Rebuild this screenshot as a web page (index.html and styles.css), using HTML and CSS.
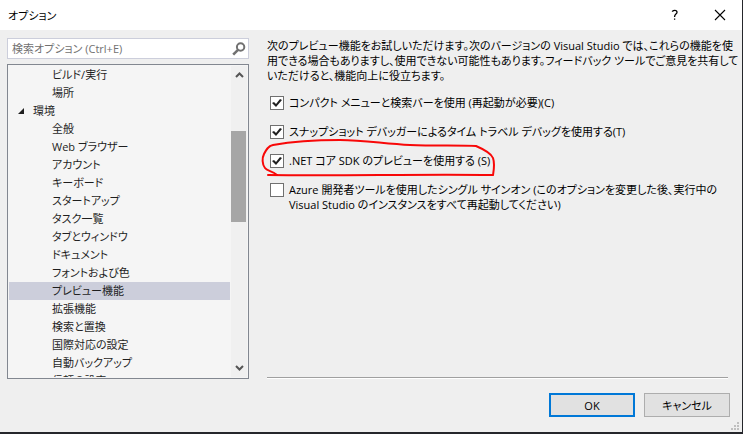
FILE: index.html
```html
<!DOCTYPE html>
<html lang="ja">
<head>
  <meta charset="UTF-8">
  <meta name="viewport" content="width=device-width, initial-scale=1.0">
  <title>オプション</title>
  <link rel="stylesheet" href="styles.css">
</head>
<body>
  <div class="dialog">
    <header class="titlebar">
      <h1>オプション</h1>
      <button class="title-btn" aria-label="ヘルプ">
        <svg width="8" height="12" viewBox="0 0 8 12"><path d="M1.5 2.8V2.2C2.2 1.5 3 1.3 3.8 1.3 5.3 1.3 6 2.1 6 3.2 6 5 3.6 5.2 3.6 7.4V8M3.6 9.4V10.8" fill="none" stroke="#000" stroke-width="1.3"/></svg>
      </button>
      <button class="title-btn" aria-label="閉じる">
        <svg width="12" height="12" viewBox="0 0 12 12"><path d="M1 1L11 11M11 1L1 11" stroke="#000" stroke-width="1.1"/></svg>
      </button>
    </header>

    <main class="content">
      <div class="side">
        <div class="search">
          <input type="text" placeholder="検索オプション (Ctrl+E)" aria-label="検索オプション">
          <svg width="14" height="14" viewBox="0 0 14 14"><circle cx="8.6" cy="5" r="3.7" fill="none" stroke="#717171" stroke-width="2"/><path d="M6 7.8L1.2 12.6" stroke="#717171" stroke-width="2.6"/></svg>
        </div>
        <div class="tree">
          <ul class="tree-list">
            <li>ビルド/実行</li>
            <li>場所</li>
            <li class="parent">
              <svg width="6" height="6" viewBox="0 0 6 6"><path d="M6 0V6H0Z" fill="#1e1e1e"/></svg>環境
            </li>
            <li>全般</li>
            <li>Web ブラウザー</li>
            <li>アカウント</li>
            <li>キーボード</li>
            <li>スタートアップ</li>
            <li>タスク一覧</li>
            <li>タブとウィンドウ</li>
            <li>ドキュメント</li>
            <li>フォントおよび色</li>
            <li class="selected">プレビュー機能</li>
            <li>拡張機能</li>
            <li>検索と置換</li>
            <li>国際対応の設定</li>
            <li>自動バックアップ</li>
            <li>信頼の設定</li>
          </ul>
          <div class="scrollbar">
            <svg width="9" height="6" viewBox="0 0 9 6"><path d="M1 5L4.5 1.5 8 5" fill="none" stroke="#555" stroke-width="2"/></svg>
            <div class="track"><div class="thumb"></div></div>
            <svg width="9" height="6" viewBox="0 0 9 6"><path d="M1 1L4.5 4.5 8 1" fill="none" stroke="#555" stroke-width="2"/></svg>
          </div>
        </div>
      </div>

      <section class="page">
        <p class="intro">次のプレビュー機能をお試しいただけます。次のバージョンの Visual Studio では、これらの機能を使<br>用できる場合もありますし、使用できない可能性もあります。フィードバック ツールでご意見を共有して<br>いただけると、機能向上に役立ちます。</p>
        <div class="options">
          <label class="option"><input type="checkbox" checked><span>コンパクト メニューと検索バーを使用 (再起動が必要)(C)</span></label>
          <label class="option"><input type="checkbox" checked><span>スナップショット デバッガーによるタイム トラベル デバッグを使用する(T)</span></label>
          <label class="option marked">
            <input type="checkbox" checked><span>.NET コア SDK のプレビューを使用する (S)</span>
            <svg class="marker" width="240" height="40" viewBox="0 0 240 40"><path d="M17 37C13 33 7 33 5 30C2 26 2 20 4 16C6 12 8 8 13 7C35 3 55 2 80 2C105 2 125 6 150 7C175 8 202 7 216 8C223 11 231 15 233 20C235 26 234 31 233 37C160 36 80 38 8 37" fill="none" stroke="#f80808" stroke-width="2" stroke-linejoin="round" stroke-linecap="round"/></svg>
          </label>
          <label class="option"><input type="checkbox"><span>Azure 開発者ツールを使用したシングル サインオン (このオプションを変更した後、実行中の<br>Visual Studio のインスタンスをすべて再起動してください)</span></label>
        </div>
      </section>
    </main>

    <footer class="buttons">
      <button class="btn default">OK</button>
      <button class="btn">キャンセル</button>
      <svg class="grip" width="9" height="9" viewBox="0 0 9 9"><path d="M6 0h2v2h-2zM3 3h2v2h-2zM6 3h2v2h-2zM0 6h2v2h-2zM3 6h2v2h-2zM6 6h2v2h-2z" fill="#bfbfbf"/></svg>
    </footer>
  </div>
</body>
</html>
```
FILE: styles.css
```css
* {
  box-sizing: border-box;
}
body {
  margin: 0;
  font-family: "Open Sans", "Noto Sans CJK JP", sans-serif;
  font-size: 11px;
  line-height: 15px;
  font-feature-settings: "palt";
  color: #000;
}
button, input {
  font: inherit;
  font-feature-settings: inherit;
  color: inherit;
}
.dialog {
  display: flex;
  flex-direction: column;
  height: 100vh;
  background: #efefef;
  border-right: 1px solid #25262b;
  border-bottom: 2px solid #25262b;
}

/* title bar */
.titlebar {
  display: flex;
  align-items: center;
  height: 30px;
  padding-left: 8px;
  background: #fff;
}
.titlebar h1 {
  flex: 1;
  margin: 0;
  font-size: 11px;
  font-weight: normal;
}
.title-btn {
  display: flex;
  align-items: center;
  justify-content: center;
  width: 45px;
  height: 28px;
  padding: 0;
  border: none;
  background: none;
}

.content {
  flex: 1;
  display: grid;
  grid-template-columns: 242px 1fr;
  gap: 18px;
  min-height: 0;
  padding: 8px 14px 0 7px;
}

/* search and tree */
.side {
  display: flex;
  flex-direction: column;
  gap: 5px;
  min-height: 0;
}
.search {
  display: flex;
  align-items: center;
  height: 21px;
  padding: 0 2px 0 4px;
  background: #fff;
  border: 1px solid #cccedb;
}
.search input {
  flex: 1;
  min-width: 0;
  padding: 0;
  border: none;
  outline: none;
  background: none;
}
.search input::placeholder {
  color: #717171;
}
.tree {
  flex: 1;
  display: flex;
  gap: 1px;
  min-height: 0;
  padding: 1px;
  background: #f5f5f5;
  border: 1px solid #828790;
}
.tree-list {
  flex: 1;
  margin: 0;
  padding: 0;
  overflow: hidden;
  list-style: none;
  color: #1e1e1e;
}
.tree-list li {
  height: 18px;
  padding-left: 43px;
  line-height: 18px;
  white-space: nowrap;
}
.tree-list .parent {
  display: flex;
  align-items: center;
  gap: 9px;
  padding-left: 9px;
}
.tree-list .selected {
  background: #cccedb;
}
.scrollbar {
  display: flex;
  flex-direction: column;
  align-items: center;
  width: 16px;
  padding: 6px 0;
  background: #f0f0f0;
}
.track {
  flex: 1;
  width: 100%;
  padding-top: 53px;
}
.thumb {
  width: 15px;
  height: 91px;
  background: #a6a6a6;
}

/* settings page */
.page {
  min-width: 0;
  margin-bottom: 1px;
  border-bottom: 1px solid #a0a0a0;
  box-shadow: 0 1px #fff;
}
.intro {
  margin: 0;
  white-space: nowrap;
}
.options {
  display: flex;
  flex-direction: column;
  gap: 14px;
  padding: 12px 0 0 3px;
}
.option {
  display: flex;
  align-items: flex-start;
  gap: 5px;
  white-space: nowrap;
}
.option input {
  appearance: none;
  flex: none;
  width: 14px;
  height: 14px;
  margin: 1px 0 0;
  background: #fff;
  border: 1px solid #707070;
}
.option input:checked::before {
  content: "";
  display: block;
  width: 12px;
  height: 12px;
  background: #212121;
  clip-path: polygon(1px 6px, 3px 5px, 5px 7px, 9px 2px, 11px 3px, 5px 10px);
}
.marked {
  position: relative;
}
.marker {
  position: absolute;
  left: -10px;
  top: -15px;
}

.buttons {
  position: relative;
  display: flex;
  justify-content: flex-end;
  gap: 9px;
  padding: 14px 12px 15px;
}
.btn {
  width: 86px;
  height: 24px;
  padding: 0;
  background: #e1e1e1;
  border: 1px solid #adadad;
}
.btn.default {
  border: 2px solid #0078d7;
}
.grip {
  position: absolute;
  right: 2px;
  bottom: 1px;
}
```
